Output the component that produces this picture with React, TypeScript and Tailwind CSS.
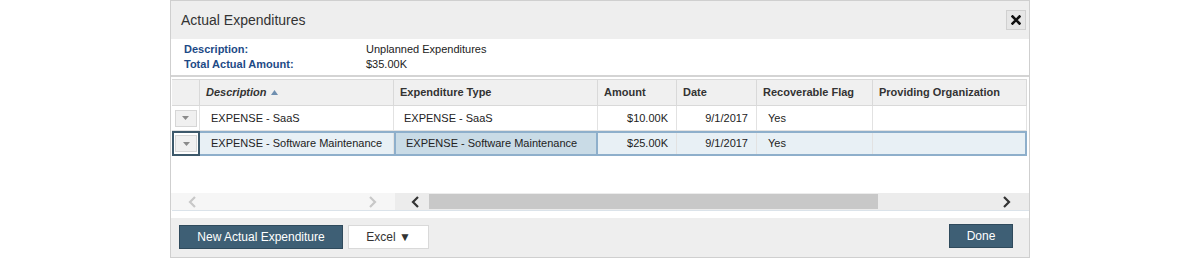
import { ReactNode } from 'react';

const cols = [
  { key: 'sel', w: 'w-[28px]' },
  { key: 'desc', w: 'w-[194px]' },
  { key: 'type', w: 'w-[204px]' },
  { key: 'amount', w: 'w-[79px]' },
  { key: 'date', w: 'w-[80px]' },
  { key: 'flag', w: 'w-[116px]' },
  { key: 'org', w: 'w-[153px]' },
];

const rows = [
  { desc: 'EXPENSE - SaaS', type: 'EXPENSE - SaaS', amount: '$10.00K', date: '9/1/2017', flag: 'Yes', org: '' },
  { desc: 'EXPENSE - Software Maintenance', type: 'EXPENSE - Software Maintenance', amount: '$25.00K', date: '9/1/2017', flag: 'Yes', org: '' },
];

function HeaderCell({ w, children, last }: { w: string; children?: ReactNode; last?: boolean }) {
  return (
    <div
      className={`${w} shrink-0 h-full flex items-center px-[6px] text-[11px] font-bold text-[#333] ${
        last ? '' : 'border-r border-[#d9d9d9]'
      }`}
    >
      {children}
    </div>
  );
}

function RowToggle() {
  return (
    <div className="w-[22px] h-[17px] bg-[#f0f0f0] border border-[#d6d6d6] flex items-center justify-center">
      <svg width="7" height="4" viewBox="0 0 7 4">
        <path d="M0 0 L7 0 L3.5 4 Z" fill="#8a8a8a" />
      </svg>
    </div>
  );
}

function Chevron({ dir, color }: { dir: 'left' | 'right'; color: string }) {
  return (
    <svg width="9" height="12" viewBox="0 0 9 12">
      <path
        d={dir === 'left' ? 'M7 1 L2 6 L7 11' : 'M2 1 L7 6 L2 11'}
        fill="none"
        stroke={color}
        strokeWidth="2.2"
      />
    </svg>
  );
}

export default function App() {
  return (
    <div className="w-full h-[258px] bg-white" style={{ fontFamily: '"Liberation Sans", Arial, sans-serif' }}>
      <div className="mx-auto w-[860px] h-[258px] border border-[#cfcfcf] flex flex-col bg-white">
        {/* Title bar */}
        <div className="h-[38px] shrink-0 bg-[#eeeeee] flex items-center justify-between pl-[10px] pr-[3px]">
          <span className="text-[14px] text-[#333]">Actual Expenditures</span>
          <button className="w-[20px] h-[20px] bg-[#e6e6e6] border border-[#d0d0d0] flex items-center justify-center">
            <svg width="10" height="10" viewBox="0 0 10 10">
              <path d="M1.5 1.5 L8.5 8.5 M8.5 1.5 L1.5 8.5" stroke="#111" strokeWidth="2.6" strokeLinecap="square" />
            </svg>
          </button>
        </div>

        {/* Summary */}
        <div className="h-[38px] shrink-0 flex flex-col justify-center pl-[13px] text-[11px] leading-[15px] border-b-2 border-[#d4d4d4]">
          <div className="flex">
            <span className="w-[182px] font-bold text-[#1d4a86]">Description:</span>
            <span className="text-[#222]">Unplanned Expenditures</span>
          </div>
          <div className="flex">
            <span className="w-[182px] font-bold text-[#1d4a86]">Total Actual Amount:</span>
            <span className="text-[#222]">$35.00K</span>
          </div>
        </div>

        {/* Grid */}
        <div className="flex-1 flex flex-col pt-[2px] pl-px">
          <div className="h-[27px] flex bg-[#f0f0f0] border-y border-[#d9d9d9] w-[855px]">
            <HeaderCell w={cols[0].w} />
            <HeaderCell w={cols[1].w}>
              <span className="italic">Description</span>
              <svg className="ml-[4px]" width="7" height="5" viewBox="0 0 7 5">
                <path d="M0 5 L7 5 L3.5 0 Z" fill="#6f8fb0" />
              </svg>
            </HeaderCell>
            <HeaderCell w={cols[2].w}>Expenditure Type</HeaderCell>
            <HeaderCell w={cols[3].w}>Amount</HeaderCell>
            <HeaderCell w={cols[4].w}>Date</HeaderCell>
            <HeaderCell w={cols[5].w}>Recoverable Flag</HeaderCell>
            <HeaderCell w="w-[154px]">Providing Organization</HeaderCell>
          </div>

          {rows.map((r, i) => {
            const selected = i === 1;
            return (
              <div
                key={i}
                className={`h-[25px] flex text-[11px] text-[#222] w-[855px] ${
                  selected ? 'bg-[#e8f0f5] border-y-2 border-[#8eafcb]' : 'border-b border-[#e2e2e2]'
                }`}
              >
                <div
                  className={`${cols[0].w} shrink-0 flex items-center justify-center ${
                    selected ? 'border-2 border-[#3d596b] -my-[2px] bg-white' : 'border-r border-[#e2e2e2]'
                  }`}
                >
                  <RowToggle />
                </div>
                <div className={`${cols[1].w} shrink-0 flex items-center pl-[11px] border-r border-[#e2e2e2] whitespace-nowrap`}>
                  {r.desc}
                </div>
                <div
                  className={`${cols[2].w} shrink-0 flex items-center pl-[10px] whitespace-nowrap ${
                    selected ? 'bg-[#c9dbe6] border-x-2 border-[#8eafcb] pl-[9px]' : 'border-r border-[#e2e2e2]'
                  }`}
                >
                  {r.type}
                </div>
                <div className={`${cols[3].w} shrink-0 flex items-center justify-end pr-[8px] border-r border-[#e2e2e2]`}>
                  {r.amount}
                </div>
                <div className={`${cols[4].w} shrink-0 flex items-center justify-end pr-[8px] border-r border-[#e2e2e2]`}>
                  {r.date}
                </div>
                <div className={`${cols[5].w} shrink-0 flex items-center pl-[11px] border-r border-[#e2e2e2]`}>
                  {r.flag}
                </div>
                <div
                  className={`w-[154px] shrink-0 flex items-center ${
                    selected ? 'border-r-2 border-[#8eafcb]' : 'border-r border-[#e2e2e2]'
                  }`}
                >
                  {r.org}
                </div>
              </div>
            );
          })}

          <div className="flex-1" />

          {/* Scroll bars */}
          <div className="h-[17px] flex -ml-px">
            <div className="w-[224px] shrink-0 bg-[#f6f6f6] flex items-center justify-between pl-[17px] pr-[18px]">
              <Chevron dir="left" color="#c8c8c8" />
              <Chevron dir="right" color="#c8c8c8" />
            </div>
            <div className="flex-1 bg-[#ececec] flex items-center pl-[16px] pr-[18px]">
              <Chevron dir="left" color="#333" />
              <div className="ml-[9px] w-[449px] h-[15px] bg-[#c8c8c8]" />
              <div className="flex-1" />
              <Chevron dir="right" color="#333" />
            </div>
          </div>
          <div className="h-[8px] border-t border-[#dbe3ea]" />
        </div>

        {/* Footer */}
        <div className="h-[39px] shrink-0 bg-[#eeeeee] flex items-start pt-[7px] pl-[8px] pr-[16px]">
          <button className="h-[24px] w-[164px] bg-[#3e5f75] border border-[#2f4a5c] text-white text-[12px]">
            New Actual Expenditure
          </button>
          <button className="ml-[5px] h-[24px] w-[81px] bg-white border border-[#d9d9d9] text-[#333] text-[12px]">
            Excel ▼
          </button>
          <div className="flex-1" />
          <button className="-mt-px h-[24px] w-[64px] bg-[#3e5f75] border border-[#2f4a5c] text-white text-[12px]">
            Done
          </button>
        </div>
      </div>
    </div>
  );
}
